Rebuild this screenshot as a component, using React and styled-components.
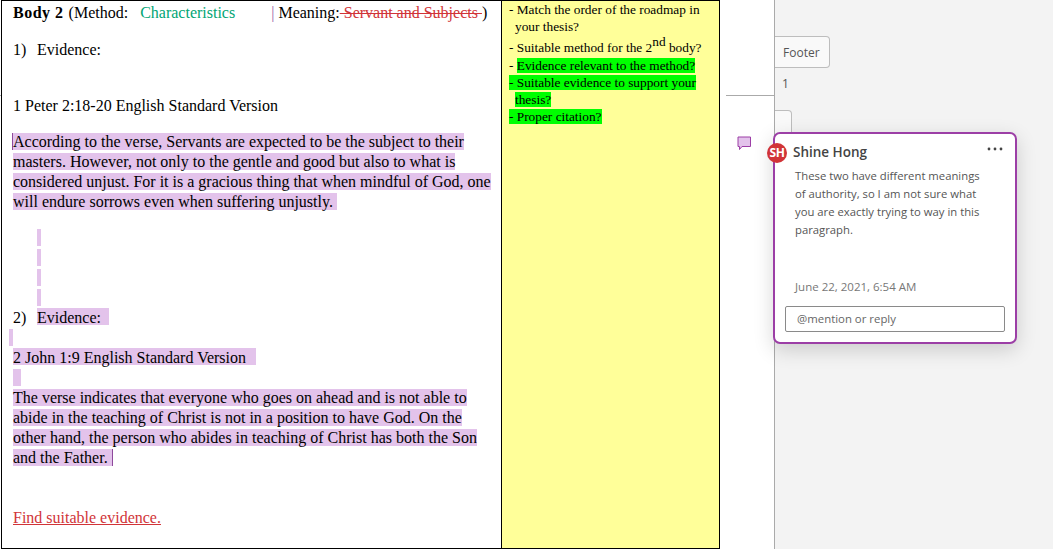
import React from "react";
import styled, { createGlobalStyle } from "styled-components";

const GlobalStyle = createGlobalStyle`
  html, body {
    margin: 0;
    padding: 0;
    background: #fff;
    overflow: hidden;
  }
`;

const Page = styled.div`
  position: relative;
  display: flex;
  width: 1053px;
  height: 549px;
  overflow: hidden;
`;

const Sheet = styled.div`
  flex: 0 0 774px;
  box-sizing: border-box;
  padding-left: 1px;
`;

const Table = styled.div`
  display: flex;
  position: relative;
  box-sizing: border-box;
  width: 719px;
  height: 549px;
  border: 1px solid #000;
  background: #fff;
  font-family: "Liberation Serif", "Times New Roman", serif;
  color: #000;
`;

const MainCell = styled.div`
  flex: 0 0 500px;
  box-sizing: border-box;
  padding: 2px 6px 0 11px;
  border-right: 1px solid #000;
  font-size: 16px;
  line-height: 20px;
`;

const NoteCell = styled.div`
  flex: 1;
  box-sizing: border-box;
  padding: 0 10px 0 7px;
  background: #ffff99;
  font-size: 13.33px;
  line-height: 17px;
`;

const Line = styled.div`
  display: flex;
  align-items: flex-start;
  height: 20px;
  white-space: pre;
  margin-top: ${({ $top }) => $top || 0}px;
`;

const Para = styled.div`
  margin-top: ${({ $top }) => $top || 0}px;
`;

const Num = styled.span`
  flex: 0 0 24px;
`;

const Mark = styled.span`
  background: linear-gradient(#e3c3eb, #e3c3eb) no-repeat;
  background-size: 100% 17px;
  padding-right: ${({ $pad }) => $pad || 0}px;
`;

const Blank = styled.span`
  display: block;
  height: 17px;
  width: ${({ $w }) => $w}px;
  margin: 1px 0 0 ${({ $left }) => $left || 0}px;
  background: #e3c3eb;
`;

const Caret = styled.span`
  display: inline-block;
  width: 1px;
  height: 17px;
  margin-left: ${({ $lead }) => ($lead ? -1 : 0)}px;
  vertical-align: -3px;
  background: #8e4a9c;
`;

const Heading = styled.b`
  letter-spacing: 0.5px;
  margin-right: 1px;
`;

const Method = styled.span`
  color: #00a574;
`;

const Struck = styled.span`
  color: #d13438;
  text-decoration: line-through;
`;

const Bar = styled.span`
  color: #9a5fa6;
`;

const Todo = styled.span`
  color: #d13438;
  text-decoration: underline;
`;

const Note = styled.div`
  padding-left: 6px;
  text-indent: -6px;
  margin-top: ${({ $top }) => $top || 0}px;
`;

const Green = styled.span`
  background: #00ff00;
`;

const Sup = styled.sup`
  font-size: 13.33px;
  line-height: 0;
  vertical-align: 6px;
`;

const Rule = styled.div`
  position: absolute;
  top: 95px;
  left: ${({ $left }) => $left}px;
  width: ${({ $w }) => $w}px;
  height: 1px;
  background: #aaa;
`;

const Gutter = styled.aside`
  flex: 1;
  box-sizing: border-box;
  padding-top: 36px;
  border-left: 1px solid #aaa;
  background: #f3f3f3;
  font-family: "Open Sans", "Noto Sans", sans-serif;
  font-size: 12px;
  color: #555;
`;

const FooterTab = styled.div`
  box-sizing: border-box;
  width: 55px;
  height: 32px;
  padding-left: 8px;
  line-height: 31px;
  border: 1px solid #bdbdbd;
  border-left: none;
  border-radius: 0 4px 4px 0;
  background: #f9f9f9;
`;

const PageNumber = styled.div`
  padding: 8px 0 0 7px;
  line-height: 16px;
`;

const EmptyTab = styled.div`
  box-sizing: border-box;
  width: 17px;
  height: 40px;
  margin-top: 18px;
  border: 1px solid #bdbdbd;
  border-left: none;
  border-radius: 0 4px 0 0;
  background: #f9f9f9;
`;

const Bubble = styled.svg`
  position: absolute;
  left: 737px;
  top: 136px;
`;

const Card = styled.section`
  position: absolute;
  left: 773px;
  top: 132px;
  box-sizing: border-box;
  width: 244px;
  height: 212px;
  padding: 9px 10px 0 12px;
  border: 2px solid #9c3fa6;
  border-radius: 7px;
  background: #fff;
  box-shadow: 0 6px 20px rgba(0, 0, 0, 0.16);
  font-family: "Open Sans", "Noto Sans", sans-serif;
`;

const Avatar = styled.div`
  position: absolute;
  left: -8px;
  top: 9px;
  width: 20px;
  height: 20px;
  border-radius: 50%;
  background: #d13438;
  color: #fff;
  font-size: 12px;
  font-weight: 700;
  letter-spacing: -0.4px;
  line-height: 20px;
  text-align: center;
`;

const CardHead = styled.div`
  display: flex;
  align-items: center;
  justify-content: space-between;
  padding: 0 2px 0 6px;
  height: 18px;
`;

const Name = styled.div`
  font-size: 13.5px;
  font-weight: 600;
  color: #444;
`;

const Dots = styled.svg`
  margin: -6px 0 0;
  display: block;
`;

const Body = styled.p`
  width: 190px;
  margin: 6px 0 0 8px;
  font-size: 11.3px;
  line-height: 18px;
  color: #555;
`;

const Stamp = styled.div`
  margin: 40px 0 0 8px;
  font-size: 11.5px;
  line-height: 16px;
  color: #777;
`;

const Reply = styled.div`
  box-sizing: border-box;
  height: 26px;
  margin: 11px 0 0 -2px;
  padding-left: 11px;
  line-height: 24px;
  border: 1px solid #8a8a8a;
  border-radius: 2px;
  font-size: 11.4px;
  color: #666;
`;

export default function App() {
  return (
    <Page>
      <GlobalStyle />
      <Sheet>
        <Table>
          <MainCell>
            <Line>
              <span>
                <Heading>Body 2</Heading> (Method:{"   "}
                <Method>Characteristics</Method>
                {"         "}
                <Bar>|</Bar> Meaning:<Struck> Servant and Subjects </Struck>)
              </span>
            </Line>
            <Line $top={17}>
              <Num>1)</Num>
              <span>Evidence:</span>
            </Line>
            <Line $top={36}>1 Peter 2:18-20 English Standard Version</Line>
            <Para $top={16}>
              <Mark>
                <Caret $lead />
                According to the verse, Servants are expected to be the subject to
                their masters. However, not only to the gentle and good but also to
                what is considered unjust. For it is a gracious thing that when
                mindful of God, one will endure sorrows even when suffering
                unjustly.{"\u00a0"}
              </Mark>
            </Para>
            <Line $top={16}>
              <Blank $w={4} $left={24} />
            </Line>
            <Line>
              <Blank $w={4} $left={24} />
            </Line>
            <Line>
              <Blank $w={4} $left={24} />
            </Line>
            <Line>
              <Blank $w={4} $left={24} />
            </Line>
            <Line>
              <Num>2)</Num>
              <Mark>Evidence:{"  "}</Mark>
            </Line>
            <Line>
              <Blank $w={4} $left={-4} />
            </Line>
            <Line>
              <Mark $pad={2}>2 John 1:9 English Standard Version {" "}</Mark>
            </Line>
            <Line>
              <Blank $w={8} />
            </Line>
            <Para>
              <Mark>
                The verse indicates that everyone who goes on ahead and is not able
                to abide in the teaching of Christ is not in a position to have God.
                On the other hand, the person who abides in teaching of Christ has
                both the Son and the Father.{"\u00a0"}
                <Caret />
              </Mark>
            </Para>
            <Line $top={40}>
              <Todo>Find suitable evidence.</Todo>
            </Line>
          </MainCell>
          <NoteCell>
            <Note>- Match the order of the roadmap in your thesis?</Note>
            <Note $top={4}>
              - Suitable method for the 2<Sup>nd</Sup> body?
            </Note>
            <Note $top={1}>
              - <Green>Evidence relevant to the method?</Green>
            </Note>
            <Note>
              <Green>- Suitable evidence to support your thesis?</Green>
            </Note>
            <Note>
              <Green>- Proper citation?</Green>
            </Note>
          </NoteCell>
        </Table>
      </Sheet>
      <Gutter>
        <FooterTab>Footer</FooterTab>
        <PageNumber>1</PageNumber>
        <EmptyTab />
      </Gutter>
      <Rule $left={0} $w={1} />
      <Rule $left={726} $w={48} />
      <Bubble width="15" height="15" viewBox="0 0 15 15">
        <path
          d="M1 1h12.5v9.5H5L2.5 13.5V10.5H1z"
          fill="#e3c3eb"
          stroke="#9c3fa6"
          strokeWidth="1"
        />
      </Bubble>
      <Card>
        <Avatar>SH</Avatar>
        <CardHead>
          <Name>Shine Hong</Name>
          <Dots width="16" height="4" viewBox="0 0 16 4">
            <circle cx="2" cy="2" r="1.4" fill="#444" />
            <circle cx="8" cy="2" r="1.4" fill="#444" />
            <circle cx="14" cy="2" r="1.4" fill="#444" />
          </Dots>
        </CardHead>
        <Body>
          These two have different meanings of authority, so I am not sure what you
          are exactly trying to way in this paragraph.
        </Body>
        <Stamp>June 22, 2021, 6:54 AM</Stamp>
        <Reply>@mention or reply</Reply>
      </Card>
    </Page>
  );
}
